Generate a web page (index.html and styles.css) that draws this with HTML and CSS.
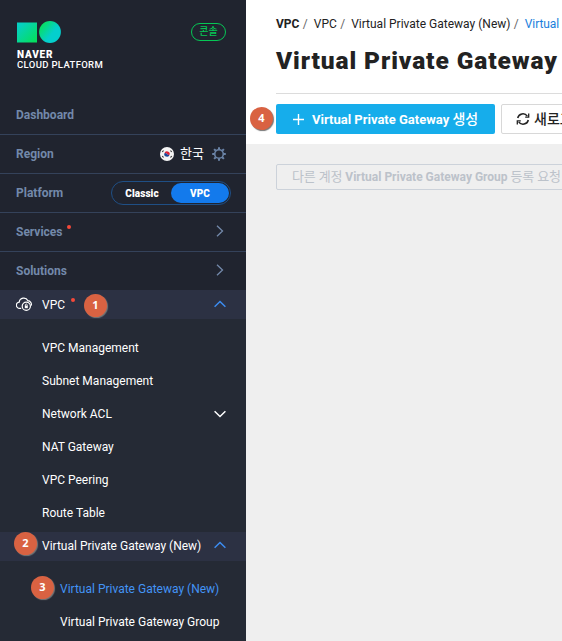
FILE: index.html
```html
<!DOCTYPE html>
<html lang="ko">
<head>
<meta charset="utf-8">
<title>Virtual Private Gateway</title>
<link rel="stylesheet" href="styles.css">
</head>
<body>
<div class="app">
  <aside class="sidebar">
    <header class="brand">
      <div class="logo">
        <svg class="logo-mark" width="44" height="22" viewBox="0 0 44 22">
          <defs>
            <linearGradient id="sq" x1="0" y1="0" x2="1" y2="1"><stop offset=".15" stop-color="#06cfc0"/><stop offset=".9" stop-color="#05df60"/></linearGradient>
            <linearGradient id="ci" x1="0" y1="0.1" x2="1" y2=".9"><stop offset=".1" stop-color="#08df60"/><stop offset=".6" stop-color="#04cfcd"/></linearGradient>
          </defs>
          <rect x="0" y="1.500" width="20" height="20" fill="url(#sq)"/>
          <circle cx="33" cy="11" r="10.9" fill="url(#ci)"/>
        </svg>
        <strong class="logo-naver">NAVER</strong>
        <span class="logo-cloud">CLOUD PLATFORM</span>
      </div>
      <span class="console">콘솔</span>
    </header>

    <nav>
      <div class="row"><span>Dashboard</span></div>
      <div class="row">
        <span>Region</span>
        <span class="region">
          <svg width="14" height="14" viewBox="0 0 14 14">
            <circle cx="7" cy="7" r="7" fill="#f4f4f4"/>
            <path d="M4.400 6.200a2.700 2.700 0 0 1 5.200 1.600Q8.300 8.500 7 7 5.500 5.500 4.400 6.200z" fill="#dc2438"/>
            <path d="M4.400 6.200Q5.500 5.500 7 7t2.600.8A2.700 2.700 0 0 1 4.400 6.200z" fill="#1d4698"/>
            <path d="M2.300 5 3.500 3.500M10.500 3.500 11.700 5M2.300 9 3.500 10.500M10.500 10.500 11.700 9" stroke="#333" stroke-width="1.200"/>
          </svg>
          <span class="region-name">한국</span>
          <svg class="gear" width="14" height="14" viewBox="0 0 14 14" fill="none" stroke="#6a83a6">
            <circle cx="7" cy="7" r="4.300" stroke-width="1.600"/>
            <path d="M7 .2v2.400M7 11.400v2.400M.2 7h2.400M11.400 7h2.400M2.100 2.100l1.700 1.700M10.200 10.200l1.700 1.700M2.100 11.900l1.700-1.700M10.200 3.800l1.700-1.700" stroke-width="2"/>
          </svg>
        </span>
      </div>
      <div class="row">
        <span>Platform</span>
        <span class="switch"><b class="off">Classic</b><b class="on">VPC</b></span>
      </div>
      <div class="row">
        <span>Services</span><i class="dot"></i>
        <svg class="chev" width="8" height="12" viewBox="0 0 8 12"><path d="M1 .8 6.500 6 1 11.200"/></svg>
      </div>
      <div class="row last">
        <span>Solutions</span>
        <svg class="chev" width="8" height="12" viewBox="0 0 8 12"><path d="M1 .8 6.500 6 1 11.200"/></svg>
      </div>
    </nav>

    <section class="menu">
      <div class="group vpc">
        <svg class="cloud" width="17" height="15" viewBox="0 0 17 15" fill="none" stroke="#fff" stroke-width="1.200">
          <path d="M5.200 11.300H3.800A3.100 3.100 0 0 1 3.200 5.100 4.600 4.600 0 0 1 11.900 3.700 3.700 3.700 0 0 1 15.200 8.600"/>
          <circle cx="10.300" cy="9.200" r="4.100"/>
          <rect x="8.800" y="8.700" width="3" height="2.500" fill="#fff" stroke="none"/>
          <path d="M9.400 9V7.900a.9.9 0 0 1 1.800 0V9" stroke-width=".8"/>
        </svg>
        <span>VPC</span><i class="dot"></i>
        <em class="badge b1">1</em>
        <svg class="arrow blue" width="12" height="8" viewBox="0 0 12 8"><path d="M.6 6.700 6 1.500l5.400 5.200"/></svg>
      </div>
      <div class="items">
        <div class="item"><span>VPC Management</span></div>
        <div class="item"><span>Subnet Management</span></div>
        <div class="item"><span>Network ACL</span><svg class="arrow" width="12" height="8" viewBox="0 0 12 8"><path d="M.6 1.300 6 6.500l5.400-5.200"/></svg></div>
        <div class="item"><span>NAT Gateway</span></div>
        <div class="item"><span>VPC Peering</span></div>
        <div class="item"><span>Route Table</span></div>
      </div>
      <div class="group vpg">
        <em class="badge b2">2</em>
        <span>Virtual Private Gateway (New)</span>
        <svg class="arrow blue" width="12" height="8" viewBox="0 0 12 8"><path d="M.6 6.700 6 1.500l5.400 5.200"/></svg>
      </div>
      <div class="subitems">
        <div class="item active"><em class="badge b3">3</em><span>Virtual Private Gateway (New)</span></div>
        <div class="item"><span>Virtual Private Gateway Group</span></div>
      </div>
    </section>
  </aside>

  <main class="main">
    <div class="head">
      <div class="crumbs"><b>VPC</b><i>/</i><span>VPC</span><i>/</i><span>Virtual Private Gateway (New)</span><i>/</i><span class="current">Virtual</span></div>
      <h1>Virtual Private Gateway</h1>
      <div class="actions">
        <em class="badge b4">4</em>
        <button class="btn primary">
          <svg width="11" height="11" viewBox="0 0 11 11"><path d="M5.500 0v11M0 5.500h11" stroke="#fff" stroke-width="1.400"/></svg>
          <span>Virtual Private Gateway <span class="ko">생성</span></span>
        </button>
        <button class="btn plain">
          <svg width="14" height="12" viewBox="0 0 14 12" fill="none" stroke="#222" stroke-width="1.500">
            <path d="M1.700 5A5.300 5.300 0 0 1 11.300 3.200M12.300 7A5.300 5.300 0 0 1 2.700 8.800"/>
            <path d="M12.700.6v3.600H9.200M1.300 11.400V7.800h3.500" stroke-width="1.300"/>
          </svg>
          <span>새로고침</span>
        </button>
      </div>
    </div>
    <div class="body">
      <button class="btn request" disabled><span><span class="ko">다른 계정</span> Virtual Private Gateway Group <span class="ko">등록 요청</span></span></button>
    </div>
  </main>
</div>
</body>
</html>
```
FILE: styles.css
```css
* { box-sizing: border-box; }
body {
  margin: 0;
  font: 12px/16px Roboto, "Noto Sans CJK KR", sans-serif;
  color: #222;
  overflow: hidden;
}
i, em { font-style: normal; }
svg { display: block; flex: none; }
.app { display: flex; height: 641px; overflow: hidden; }

.sidebar { width: 246px; flex: none; background: #20242f; color: #fff; display: flex; flex-direction: column; }
.brand { height: 96px; display: flex; justify-content: space-between; align-items: flex-start; padding: 21px 20px 0 17px; flex: none; }
.logo { display: flex; flex-direction: column; }
.logo-naver { font: 900 10px/11px Roboto, sans-serif; margin-top: 6px; letter-spacing: .8px; }
.logo-cloud { font: 500 9.5px/10px Roboto, sans-serif; letter-spacing: .35px; }
.console {
  width: 35px; height: 18px; margin-top: 2px;
  border: 1px solid #06c755; border-radius: 9px; color: #06c755;
  font-size: 10px; font-weight: 500; line-height: 16px; text-align: center;
}

.row {
  height: 39px; display: flex; align-items: center; padding: 0 16px;
  border-bottom: 1px solid #34425a; color: #7389aa; font-weight: 700;
}
.row.last { border: 0; height: 38px; }
.region { margin-left: auto; margin-right: 4px; display: flex; align-items: center; gap: 7px; color: #fff; }
.region-name { font-weight: 400; font-size: 13px; margin: -1px 0 0 -1px; }
.gear { margin: -1px 0 0 1px; }
.switch {
  margin-left: auto; width: 120px; height: 24px; border: 1px solid #1f4f85; border-radius: 12px;
  display: flex; align-items: center; padding: 1px; color: #fff; font-size: 10px;
  margin-right: -1px; letter-spacing: .1px;
}
.switch b { text-align: center; line-height: 22px; height: 20px; border-radius: 10px; }
.off { width: 58px; }
.on { width: 58px; background: #137aec; }
.dot { width: 4px; height: 4px; border-radius: 50%; background: #f64939; margin: -10px 0 0 4px; }
.chev { margin: -2px 6px 0 auto; fill: none; stroke: #7389aa; stroke-width: 1.3; }

.menu { background: #252a35; flex: 1; }
.group { height: 29px; background: #2c3143; display: flex; align-items: center; position: relative; padding: 0 20px 1px 42px; }
.group.vpc { padding: 0 20px 0 16px; }
.vpc .cloud { margin-right: 9px; }
.arrow { margin-left: auto; fill: none; stroke: #fff; stroke-width: 1.5; }
.arrow.blue { stroke: #3c8cf0; margin-top: -2px; }
.vpc .dot { margin-left: 6px; }
.items { padding: 12px 0 3px; }
.item { height: 33px; display: flex; align-items: center; padding: 0 20px 0 42px; position: relative; }
.subitems { padding-top: 11px; }
.subitems .item { padding-left: 60px; }
.item.active { color: #4394f5; }

.badge {
  position: absolute; width: 23px; height: 23px; border-radius: 50%;
  background: #d96242; color: #fff; box-shadow: 1px 1px 1px #777;
  font: 700 11px/22px "Open Sans", sans-serif; text-align: center;
}
.b1 { left: 84px; top: 4px; }
.b2 { left: 14px; top: 0; }
.b3 { left: 31px; top: 4px; }

.main { flex: 1; min-width: 0; background: #efefef; overflow: hidden; white-space: nowrap; }
.head { height: 144px; background: #fff; padding: 16px 0 0 30px; }
.crumbs { display: flex; height: 16px; }
.crumbs i { margin: 0 6px 0 3.4px; color: #666; }
.crumbs .current { color: #1a80dc; letter-spacing: -.1px; }
h1 {
  font: 900 24.5px/30px Roboto, sans-serif; letter-spacing: .9px;
  margin: 14px 0 0; height: 48px; border-bottom: 1px solid #dcdcdc;
}
.actions { display: flex; gap: 6px; padding-top: 10px; position: relative; }
.actions .b4 { left: -26px; top: 13px; }
.btn {
  font: 700 13px/18px Roboto, "Noto Sans CJK KR", sans-serif; display: flex; align-items: center;
  border: 0; border-radius: 2px; padding: 0; margin: 0; flex: none; white-space: nowrap;
}
.primary { width: 219px; height: 30px; background: #16adeb; color: #fff; padding-left: 17px; gap: 8px; }
.primary .ko { font-size: 14px; font-weight: 500; }
.plain { width: 100px; height: 30px; border: 1px solid #d8d8d8; background: #fff; color: #222; padding-left: 14px; gap: 4px; font-weight: 500; font-size: 14px; }
.body { padding: 20px 0 0 30px; }
.request { width: 320px; height: 26px; background: transparent; border: 1px solid #ccd2da; color: #bcc2ca; padding-left: 15px; font-size: 12px; }
.request .ko { font-size: 13px; font-weight: 400; letter-spacing: -.15px; }
```
